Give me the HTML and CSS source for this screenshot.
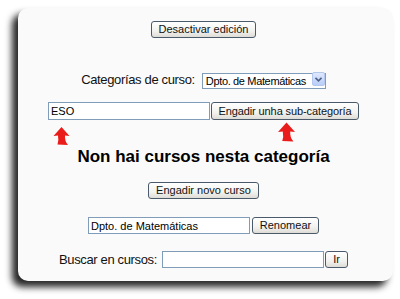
FILE: index.html
```html
<!DOCTYPE html>
<html lang="gl">
<head>
    <meta charset="UTF-8">
    <meta name="viewport" content="width=device-width, initial-scale=1.0">
    <title>Categorías de curso</title>
    <link rel="stylesheet" href="styles.css">
</head>
<body>
    <div class="card">
        <div class="row row-edit">
            <button class="btn">Desactivar edición</button>
        </div>

        <div class="row row-category">
            <label class="label" for="cat">Categorías de curso:</label>
            <div class="select-wrap">
                <select id="cat" class="select">
                    <option>Dpto. de Matemáticas</option>
                </select>
                <span class="select-arrow">
                    <svg width="7" height="5" viewBox="0 0 7 5"><path d="M0.5 0.8 L3.5 3.8 L6.5 0.8" fill="none" stroke="#4d6185" stroke-width="1.6"/></svg>
                </span>
            </div>
        </div>

        <div class="row row-sub">
            <input class="field" type="text" value="ESO">
            <button class="btn btn-sub">Engadir unha sub-categoría</button>

            <!-- red hint arrows -->
            <svg class="hint hint-left" width="17" height="18" viewBox="0 0 16 18">
                <path d="M8 0 L16 9 L11.5 8.5 Q11 14 14.5 18 L4 17.5 Q5.5 13.5 4.5 8.5 L0 9 Z" fill="#ea1b1b"/>
            </svg>
            <svg class="hint hint-right" width="17" height="20" viewBox="0 0 16 18">
                <path d="M8 0 L16 9 L11.5 8.5 Q11 14 14.5 18 L4 17.5 Q5.5 13.5 4.5 8.5 L0 9 Z" fill="#ea1b1b"/>
            </svg>
        </div>

        <h2 class="empty">Non hai cursos nesta categoría</h2>

        <div class="row row-course">
            <button class="btn">Engadir novo curso</button>
        </div>

        <div class="row row-rename">
            <input class="field" type="text" value="Dpto. de Matemáticas">
            <button class="btn btn-rename">Renomear</button>
        </div>

        <div class="row row-search">
            <label class="label" for="search">Buscar en cursos:</label>
            <input class="field field-search" id="search" type="text">
            <button class="btn btn-go">Ir</button>
        </div>
    </div>
</body>
</html>
```

FILE: styles.css
```css
* {
    margin: 0;
    padding: 0;
    box-sizing: border-box;
}

body {
    font-family: "Liberation Sans", Arial, sans-serif;
    background: #fff;
    color: #000;
    width: 400px;
    height: 299px;
    overflow: hidden;
}

.card {
    margin: 8px 7px 0 18px;
    width: 375px;
    height: 273px;
    padding: 13px 4px 0 0;
    background: #fafafa;
    border-radius: 10px;
    box-shadow: -6px 6px 7px rgba(0, 0, 0, 0.85);
    display: flex;
    flex-direction: column;
}

.row {
    display: flex;
    justify-content: center;
    align-items: center;
}

.row-edit { height: 17px; }
.row-category { margin-top: 33px; height: 16px; gap: 7px; }
.row-sub { margin-top: 15px; height: 18px; gap: 1px; position: relative; }
.row-course { margin-top: 15px; height: 17px; }
.row-rename { margin-top: 18px; height: 17px; gap: 2px; }
.row-search { margin-top: 17px; height: 17px; gap: 1px; }

.label {
    font-size: 13px;
    letter-spacing: -0.35px;
    color: #111;
}

.row-search .label { margin-right: 4px; }

.btn {
    font-family: "Liberation Sans", Arial, sans-serif;
    font-size: 11px;
    color: #111;
    height: 17px;
    padding: 0 7px;
    white-space: nowrap;
    background: linear-gradient(#ffffff, #f2f2ef 60%, #dedcd6);
    border: 1px solid #4b5a6b;
    border-radius: 3px;
    line-height: 15px;
}

.row-sub .btn { height: 18px; }

.btn-sub { width: 148px; padding: 0; letter-spacing: -0.1px; }
.btn-rename { width: 67px; padding: 0; }
.btn-go { width: 23px; padding: 0; }

.field {
    font-family: "Liberation Sans", Arial, sans-serif;
    font-size: 11px;
    color: #000;
    width: 162px;
    height: 17px;
    padding: 0 2px;
    background: #fff;
    border: 1px solid #7f9db9;
}

.row-sub .field { height: 18px; }

.select-wrap {
    position: relative;
    width: 124px;
    height: 16px;
}

.select {
    appearance: none;
    -webkit-appearance: none;
    font-family: "Liberation Sans", Arial, sans-serif;
    font-size: 11px;
    letter-spacing: -0.35px;
    color: #000;
    width: 100%;
    height: 100%;
    padding: 0 14px 0 3px;
    background: #fff;
    border: 1px solid #7f9db9;
    border-radius: 0;
}

.select-arrow {
    position: absolute;
    top: 1px;
    right: 1px;
    width: 13px;
    height: 14px;
    display: flex;
    align-items: center;
    justify-content: center;
    background: linear-gradient(#dfe9fe, #b9cdf7);
    border: 1px solid #b3c7ef;
    border-radius: 2px;
}

.hint {
    position: absolute;
}

.hint-left { left: 35px; top: 25px; }
.hint-right { left: 260px; top: 20px; }

.empty {
    margin-top: 27px;
    text-align: center;
    font-size: 17px;
    line-height: 20px;
    font-weight: bold;
    color: #000;
}
```
